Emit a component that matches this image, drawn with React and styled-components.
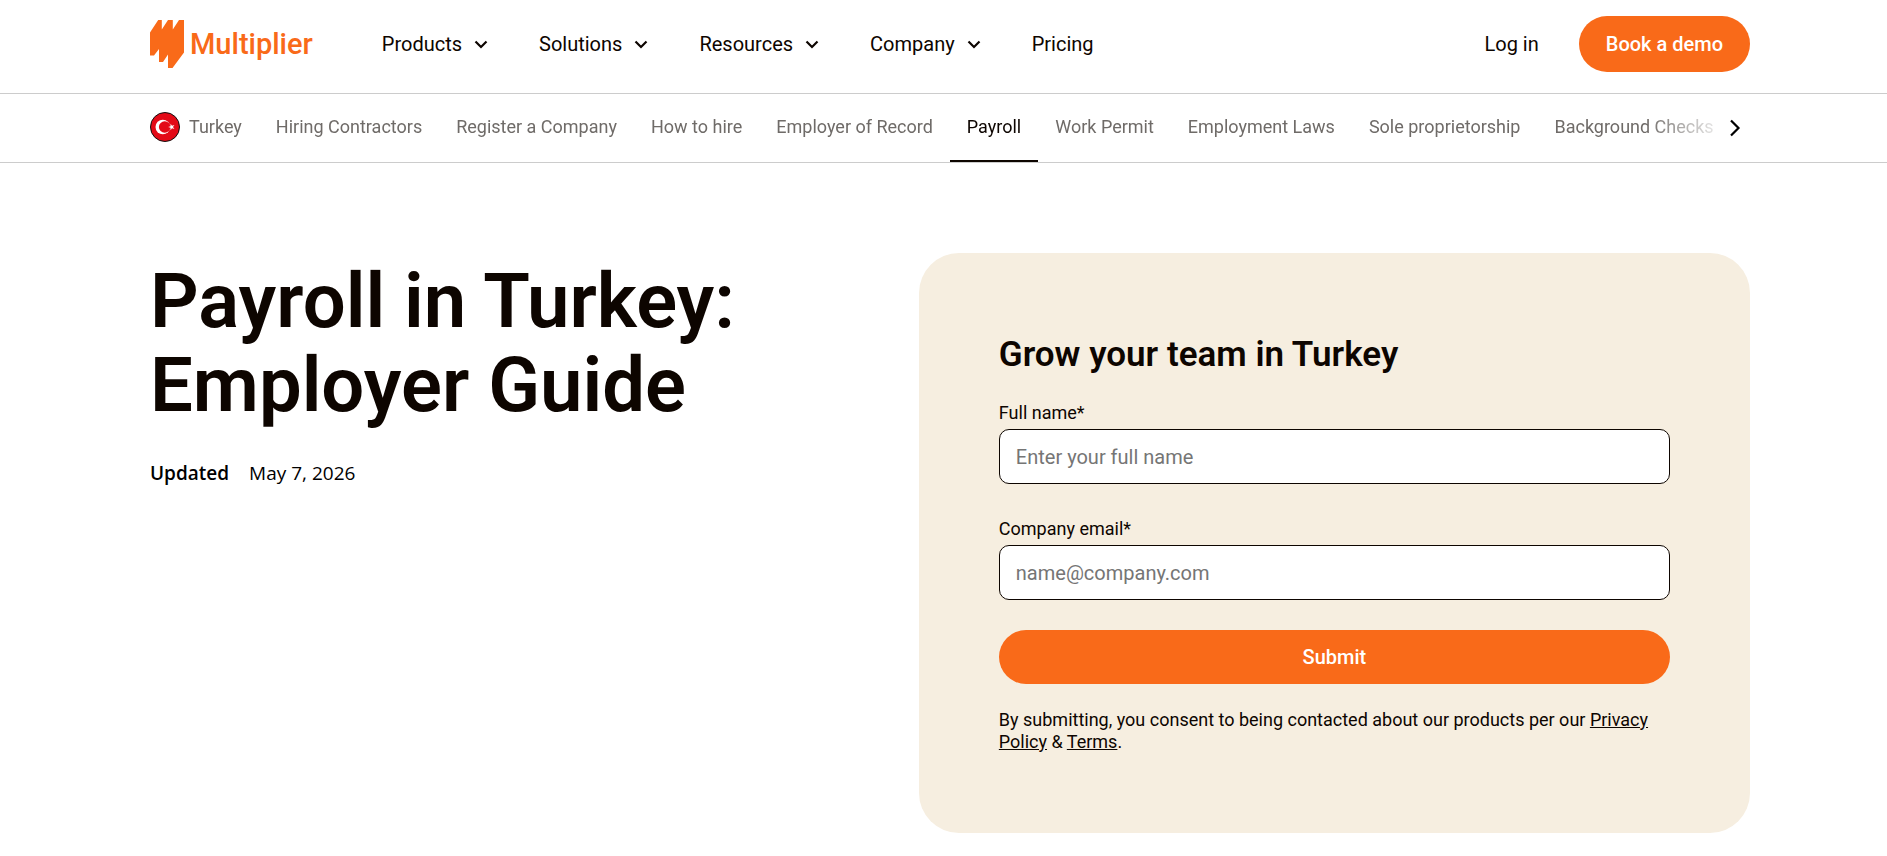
import React from 'react';
import styled, { createGlobalStyle } from 'styled-components';

const ORANGE = '#f96a19';
const INK = '#0d0500';

const GlobalStyle = createGlobalStyle`
  *, *::before, *::after { box-sizing: border-box; }
  body {
    margin: 0;
    background: #fff;
    color: ${INK};
    font-family: Roboto, "Liberation Sans", sans-serif;
    font-size: 18px;
    line-height: 22px;
  }
  a { color: inherit; text-decoration: none; }
  h1, h2, p { margin: 0; }
`;

const Bar = styled.div`
  border-bottom: 1px solid #ccc;
  padding: 0 137px 0 150px;
`;

const HeaderRow = styled(Bar).attrs({ as: 'header' })`
  display: flex;
  align-items: center;
  padding-top: 16px;
  padding-bottom: 21px;
  font-size: 20px;
  line-height: 24px;
`;

const LogoLink = styled.a`
  display: flex;
  align-items: center;
  gap: 6px;
  margin-right: 69px;
  color: ${ORANGE};
  font-size: 29px;
  font-weight: 500;
  line-height: 48px;
`;

const MainNav = styled.nav`
  display: flex;
  align-items: center;
  gap: 51px;
`;

const MenuButton = styled.button`
  display: flex;
  align-items: center;
  gap: 12px;
  padding: 0;
  border: 0;
  background: none;
  color: inherit;
  font: inherit;
  cursor: pointer;
`;

const HeaderActions = styled.div`
  display: flex;
  align-items: center;
  gap: 40px;
  margin-left: auto;
`;

const PillLink = styled.a`
  padding: 16px 27px;
  border-radius: 28px;
  background: ${ORANGE};
  color: #fff;
  font-weight: 500;
`;

const SubNav = styled(Bar).attrs({ as: 'nav' })`
  display: flex;
  align-items: center;
`;

const TabStrip = styled.div`
  display: flex;
  flex: 1;
  min-width: 0;
  overflow: hidden;
  white-space: nowrap;
  mask-image: linear-gradient(to right, #000 calc(100% - 84px), transparent);
`;

const Tab = styled.a`
  display: flex;
  flex: none;
  align-items: center;
  gap: 9px;
  height: 68px;
  padding: ${(p) => (p.$first ? '0 17px 0 0' : '0 17px')};
  border-bottom: 2px solid ${(p) => (p.$active ? INK : 'transparent')};
  color: ${(p) => (p.$active ? INK : '#6f6b68')};
`;

const ScrollButton = styled.button`
  display: flex;
  margin-right: 9px;
  padding: 0;
  border: 0;
  background: none;
  color: #000;
  cursor: pointer;
`;

const Hero = styled.main`
  display: grid;
  grid-template-columns: 37fr 40fr;
  align-items: start;
  padding: 90px 137px 24px 150px;
`;

const Intro = styled.section`
  padding-top: 6px;
`;

const Title = styled.h1`
  font-size: 76px;
  font-weight: 600;
  line-height: 84px;
`;

const Updated = styled.p`
  display: flex;
  gap: 20px;
  margin-top: 32px;
  color: #000;
  font-family: "Open Sans", "Noto Sans", sans-serif;
  font-size: 19px;
  line-height: 28px;

  strong { font-weight: 600; }
`;

const FormCard = styled.form`
  padding: 80px;
  border-radius: 40px;
  background: #f6eee0;
`;

const FormTitle = styled.h2`
  margin-bottom: 25px;
  font-size: 35px;
  font-weight: 600;
  line-height: 44px;
`;

const Field = styled.div`
  display: grid;
  gap: 5px;

  & + & { margin-top: 34px; }
`;

const TextInput = styled.input`
  width: 100%;
  height: 55px;
  padding: 0 16px;
  border: 1px solid ${INK};
  border-radius: 10px;
  background: #fff;
  color: ${INK};
  font: inherit;
  font-size: 20px;

  &::placeholder { color: #757575; opacity: 1; }
`;

const SubmitButton = styled.button`
  display: block;
  width: 100%;
  height: 54px;
  margin: 30px 0 25px;
  border: 0;
  border-radius: 27px;
  background: ${ORANGE};
  color: #fff;
  font: inherit;
  font-size: 20px;
  font-weight: 500;
  cursor: pointer;
`;

const Consent = styled.p`
  a { text-decoration: underline; }
`;

const LogoMark = () => (
  <svg width="34" height="48" viewBox="0 0 34 48" fill="currentColor" aria-hidden="true">
    <path d="M0 12.500 8.200 0h3.600v9.500L18 0h4.800v9.500L29 0h5v32.500L22.500 48H18V34.500L13 42H9V29l-5 6.500H0Z" />
  </svg>
);

const TurkeyFlag = () => (
  <svg width="30" height="30" viewBox="0 0 30 30" aria-hidden="true">
    <circle cx="15" cy="15" r="14.5" fill="#e30a17" stroke="#111" />
    <circle cx="12.8" cy="15" r="7.3" fill="#fff" />
    <circle cx="14.7" cy="15" r="5.8" fill="#e30a17" />
    <path d="m18.200 15 2.300-.8v-2.400l1.500 1.900 2.400-.8-1.400 2.100 1.400 2.100-2.400-.8-1.500 1.900v-2.400Z" fill="#fff" />
  </svg>
);

const ChevronDown = () => (
  <svg width="14" height="10" viewBox="0 0 14 10" fill="none" stroke="currentColor" strokeWidth="2.2" aria-hidden="true">
    <path d="m1.500 2.500 5.500 5.500 5.500-5.500" />
  </svg>
);

const menus = ['Products', 'Solutions', 'Resources', 'Company'];
const tabs = [
  'Turkey', 'Hiring Contractors', 'Register a Company', 'How to hire', 'Employer of Record',
  'Payroll', 'Work Permit', 'Employment Laws', 'Sole proprietorship', 'Background Checks',
];

export default function App() {
  return (
    <>
      <GlobalStyle />
      <HeaderRow>
        <LogoLink href="#">
          <LogoMark />
          Multiplier
        </LogoLink>
        <MainNav aria-label="Main">
          {menus.map((label) => (
            <MenuButton key={label} type="button">
              {label}
              <ChevronDown />
            </MenuButton>
          ))}
          <a href="#">Pricing</a>
        </MainNav>
        <HeaderActions>
          <a href="#">Log in</a>
          <PillLink href="#">Book a demo</PillLink>
        </HeaderActions>
      </HeaderRow>
      <SubNav aria-label="Turkey guide">
        <TabStrip>
          {tabs.map((label, i) => (
            <Tab key={label} href="#" $first={i === 0} $active={label === 'Payroll'}>
              {i === 0 && <TurkeyFlag />}
              {label}
            </Tab>
          ))}
        </TabStrip>
        <ScrollButton type="button" aria-label="Scroll right">
          <svg width="12" height="18" viewBox="0 0 12 18" fill="none" stroke="currentColor" strokeWidth="2.2" aria-hidden="true">
            <path d="m2 1.500 7.500 7.500L2 16.500" />
          </svg>
        </ScrollButton>
      </SubNav>
      <Hero>
        <Intro>
          <Title>
            Payroll in Turkey:
            <br />
            Employer Guide
          </Title>
          <Updated>
            <strong>Updated</strong>
            <span>May 7, 2026</span>
          </Updated>
        </Intro>
        <FormCard>
          <FormTitle>Grow your team in Turkey</FormTitle>
          <Field>
            <label htmlFor="full-name">Full name*</label>
            <TextInput id="full-name" type="text" placeholder="Enter your full name" />
          </Field>
          <Field>
            <label htmlFor="company-email">Company email*</label>
            <TextInput id="company-email" type="email" placeholder="name@company.com" />
          </Field>
          <SubmitButton type="submit">Submit</SubmitButton>
          <Consent>
            By submitting, you consent to being contacted about our products per our{' '}
            <a href="#">Privacy Policy</a> &amp; <a href="#">Terms</a>.
          </Consent>
        </FormCard>
      </Hero>
    </>
  );
}
